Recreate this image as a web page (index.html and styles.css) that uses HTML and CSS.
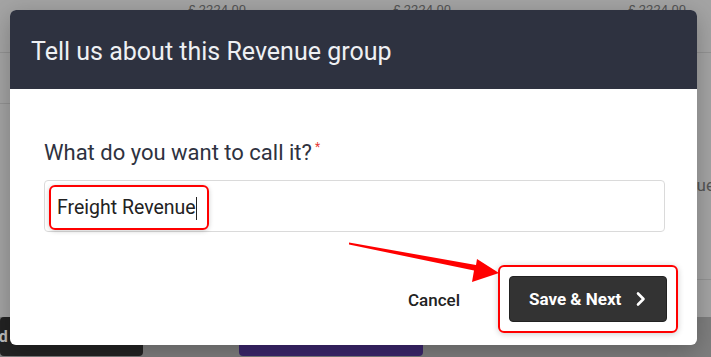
FILE: index.html
```html
<html>

<head>
    <title>Revenue group</title>
    <link rel="stylesheet" href="styles.css">
</head>

<body>

    <div class="page">
        <div class="page-head">
            <span class="amount a1">£ 2224.00</span>
            <span class="amount a2">£ 2224.00</span>
            <span class="amount a3">£ 2224.00</span>
        </div>
        <div class="page-body">
            <div class="col-left">
                <div class="row-left"></div>
            </div>
            <div class="col-right">
                <div class="row-right"><span class="cell-text">Revenue</span></div>
            </div>
        </div>
        <div class="page-foot">
            <button class="btn-dark">Add</button>
            <button class="btn-purple">Continue</button>
        </div>
    </div>

    <div class="modal">
        <div class="modal-header">
            <h1>Tell us about this Revenue group</h1>
        </div>
        <div class="modal-body">
            <label class="field-label" for="group-name">What do you want to call it?<span class="req">*</span></label>
            <div class="field">
                <span class="field-value">Freight Revenue<span class="caret"></span></span>
            </div>
        </div>
        <div class="modal-footer">
            <button class="btn-cancel">Cancel</button>
            <span class="mark">
                <button class="btn-next">Save &amp; Next
                    <svg width="12" height="16" viewBox="0 0 12 16"><path d="M3 2.5 L8.5 8 L3 13.5" fill="none" stroke="#fff" stroke-width="2.6" stroke-linecap="round" stroke-linejoin="round"/></svg>
                </button>
            </span>
        </div>
    </div>

    <!-- annotation arrow -->
    <svg class="arrow" width="711" height="357" viewBox="0 0 711 357">
        <polygon points="349,242.5 476,265 477,259 499,273 472,282 474,270.5 349,244.5" fill="#f00"/>
    </svg>

</body>

</html>
```

FILE: styles.css
```css
* {
    margin: 0;
    padding: 0;
    box-sizing: border-box;
}

body {
    font-family: Roboto, "Liberation Sans", Arial, sans-serif;
    width: 711px;
    height: 357px;
    overflow: hidden;
    position: relative;
    background: #a4a4a4;
    color: #2e3240;
}

/* dimmed page behind the dialog */

.page {
    display: flex;
    flex-direction: column;
    height: 357px;
}

.page-head {
    height: 53px;
    border-bottom: 1px solid #939393;
    position: relative;
}

.amount {
    position: absolute;
    top: 2px;
    font-size: 13px;
    color: #555;
}

.a1 { left: 188px; }
.a2 { left: 393px; }
.a3 { left: 628px; }

.page-body {
    flex: 1;
    display: grid;
    grid-template-columns: 1fr 1fr;
}

.row-left {
    height: 51px;
    border-bottom: 1px solid #939393;
}

.row-right {
    height: 227px;
    border-bottom: 1px solid #939393;
    text-align: right;
    padding-top: 122px;
    overflow: hidden;
}

.cell-text {
    font-size: 17px;
    color: #555;
    margin-right: -4px;
}

.page-foot {
    height: 40px;
    display: flex;
    gap: 96px;
    align-items: flex-start;
    background: #7e7e7e;
}

.page-foot button {
    height: 39px;
    border: none;
    border-radius: 4px;
    font: bold 16px Roboto, sans-serif;
}

.btn-dark {
    width: 143px;
    background: #232323;
    color: #bdbdbd;
    text-align: left;
    padding-left: 0;
    text-indent: -21px;
}

.btn-purple {
    width: 184px;
    background: #3b266c;
    color: #bbb;
}

/* dialog */

.modal {
    position: absolute;
    left: 10px;
    top: 10px;
    width: 687px;
    height: 335px;
    background: #ffffff;
    border-radius: 6px;
    overflow: hidden;
    box-shadow: 0 6px 24px rgba(0, 0, 0, 0.25);
    display: flex;
    flex-direction: column;
}

.modal-header {
    height: 79px;
    background: #2e3240;
    display: flex;
    align-items: center;
    padding: 3px 0 0 21px;
}

.modal-header h1 {
    font-size: 25px;
    font-weight: 400;
    color: #eef0f3;
}

.modal-body {
    padding: 51px 32px 0 34px;
}

.field-label {
    display: block;
    font-size: 22px;
    color: #2e3240;
    margin-bottom: 15px;
}

.req {
    color: #e53935;
    font-size: 12px;
    vertical-align: top;
    margin-left: 3px;
}

.field {
    height: 52px;
    border: 1px solid #dadada;
    border-radius: 4px;
    padding: 4px;
}

.field-value {
    display: inline-block;
    height: 45px;
    line-height: 41px;
    padding: 0 10px 0 6px;
    font-size: 19.5px;
    color: #222;
    border: 2px solid #f00;
    border-radius: 6px;
    box-shadow: 0 1px 5px rgba(0, 0, 0, 0.2);
}

.caret {
    display: inline-block;
    width: 1px;
    height: 23px;
    background: #222;
    vertical-align: middle;
}

.modal-footer {
    flex: 1;
    display: flex;
    justify-content: flex-end;
    align-items: flex-end;
    gap: 38px;
    padding: 0 19px 12px 0;
}

.btn-cancel {
    background: none;
    border: none;
    font: 500 17px Roboto, sans-serif;
    color: #222;
    margin-bottom: 23px;
}

.mark {
    display: block;
    padding: 9px;
    border: 2px solid #f00;
    border-radius: 6px;
    box-shadow: 0 1px 6px rgba(0, 0, 0, 0.2);
}

.btn-next {
    display: flex;
    align-items: center;
    gap: 14px;
    width: 158px;
    height: 46px;
    padding-left: 19px;
    background: #333333;
    color: #ffffff;
    border: 1px solid #222;
    border-radius: 4px;
    font: bold 17px Roboto, sans-serif;
}

.arrow {
    position: absolute;
    left: 0;
    top: 0;
}
```
